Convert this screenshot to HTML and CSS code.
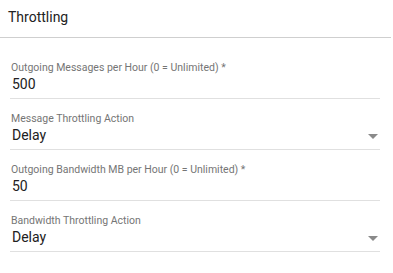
FILE: index.html
```html
<!DOCTYPE html>
<html lang="en">
<head>
<meta charset="utf-8">
<title>Throttling</title>
<link rel="stylesheet" href="styles.css">
</head>
<body>
<div class="panel">
  <div class="panel-header">Throttling</div>
  <form class="form">
    <div class="field">
      <div class="field-label">Outgoing Messages per Hour (0 = Unlimited) *</div>
      <div class="field-row"><span class="field-value">500</span></div>
    </div>
    <div class="field">
      <div class="field-label">Message Throttling Action</div>
      <div class="field-row"><span class="field-value">Delay</span><span class="arrow"></span></div>
    </div>
    <div class="field">
      <div class="field-label">Outgoing Bandwidth MB per Hour (0 = Unlimited) *</div>
      <div class="field-row"><span class="field-value">50</span></div>
    </div>
    <div class="field">
      <div class="field-label">Bandwidth Throttling Action</div>
      <div class="field-row"><span class="field-value">Delay</span><span class="arrow"></span></div>
    </div>
  </form>
</div>
</body>
</html>
```

FILE: styles.css
```css
html, body {
  margin: 0;
  padding: 0;
  background: #ffffff;
}
body {
  font-family: Roboto, "Liberation Sans", sans-serif;
  color: #212121;
}
.panel {
  width: 393px;
}
.panel-header {
  padding: 8px 0 11px 8px;
  font-size: 14px;
  line-height: 18px;
  color: #222;
  border-bottom: 1px solid #cfcfcf;
  margin-right: 2px;
}
.form {
  padding: 10px 13px 0 10px;
  display: flex;
  flex-direction: column;
}
.field {
  padding-top: 14px;
  padding-bottom: 5px;
  border-bottom: 1px solid #e0e0e0;
}
.field-label {
  font-size: 10.5px;
  line-height: 12px;
  color: #757575;
  padding-left: 1px;
}
.field-row {
  margin-top: 1px;
  display: flex;
  align-items: center;
  justify-content: space-between;
  height: 18px;
}
.field-value {
  font-size: 14px;
  line-height: 18px;
  color: #212121;
  padding-left: 2px;
}
.arrow {
  width: 0;
  height: 0;
  border-left: 5px solid transparent;
  border-right: 5px solid transparent;
  border-top: 5px solid #8a8a8a;
  margin-right: 2px;
  margin-top: 2px;
}
```
